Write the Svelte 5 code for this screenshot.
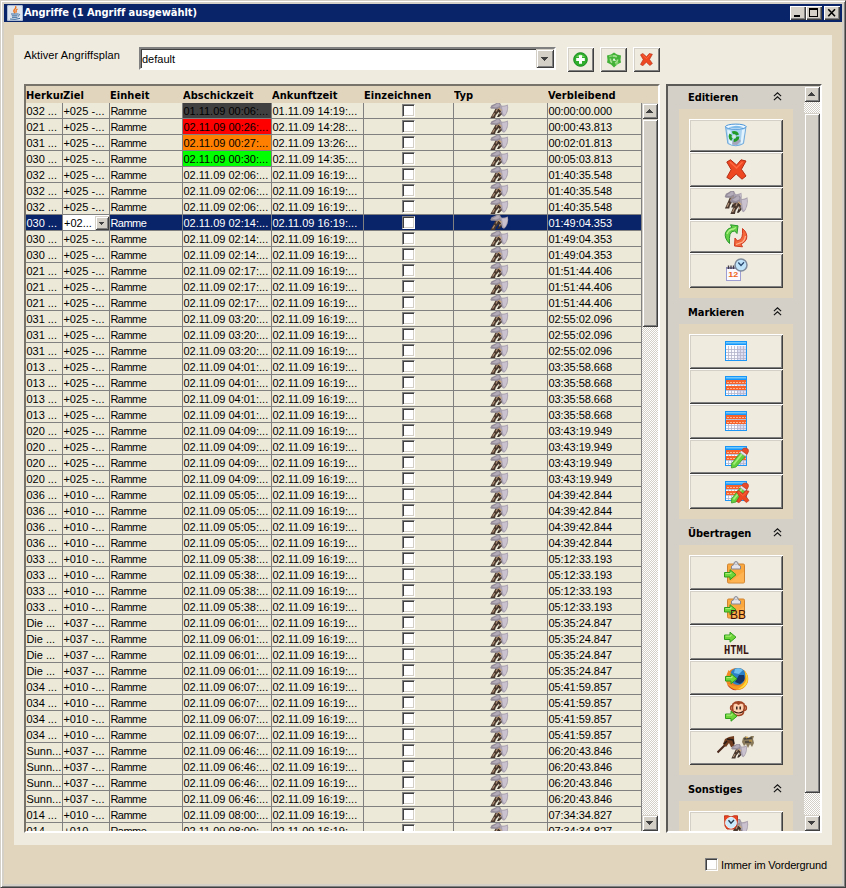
<script>
  const cols = ['Herkunft', 'Ziel', 'Einheit', 'Abschickzeit', 'Ankunftzeit', 'Einzeichnen', 'Typ', 'Verbleibend'];

  // [Anzahl, Herkunft, Ziel, Abschickzeit, Ankunftzeit, Verbleibend, Status]
  const groups = [
    [1, '032 ...', '+025 -...', '01.11.09 00:06:...', '01.11.09 14:19:...', '00:00:00.000', 'past'],
    [1, '021 ...', '+025 -...', '02.11.09 00:26:...', '02.11.09 14:28:...', '00:00:43.813', 'red'],
    [1, '031 ...', '+025 -...', '02.11.09 00:27:...', '02.11.09 13:26:...', '00:02:01.813', 'orange'],
    [1, '030 ...', '+025 -...', '02.11.09 00:30:...', '02.11.09 14:35:...', '00:05:03.813', 'green'],
    [3, '032 ...', '+025 -...', '02.11.09 02:06:...', '02.11.09 16:19:...', '01:40:35.548', ''],
    [3, '030 ...', '+025 -...', '02.11.09 02:14:...', '02.11.09 16:19:...', '01:49:04.353', ''],
    [3, '021 ...', '+025 -...', '02.11.09 02:17:...', '02.11.09 16:19:...', '01:51:44.406', ''],
    [3, '031 ...', '+025 -...', '02.11.09 03:20:...', '02.11.09 16:19:...', '02:55:02.096', ''],
    [4, '013 ...', '+025 -...', '02.11.09 04:01:...', '02.11.09 16:19:...', '03:35:58.668', ''],
    [4, '020 ...', '+025 -...', '02.11.09 04:09:...', '02.11.09 16:19:...', '03:43:19.949', ''],
    [4, '036 ...', '+010 -...', '02.11.09 05:05:...', '02.11.09 16:19:...', '04:39:42.844', ''],
    [4, '033 ...', '+010 -...', '02.11.09 05:38:...', '02.11.09 16:19:...', '05:12:33.193', ''],
    [4, 'Die ...', '+037 -...', '02.11.09 06:01:...', '02.11.09 16:19:...', '05:35:24.847', ''],
    [4, '034 ...', '+010 -...', '02.11.09 06:07:...', '02.11.09 16:19:...', '05:41:59.857', ''],
    [4, 'Sunn...', '+037 -...', '02.11.09 06:46:...', '02.11.09 16:19:...', '06:20:43.846', ''],
    [2, '014 ...', '+010 -...', '02.11.09 08:00:...', '02.11.09 16:19:...', '07:34:34.827', '']
  ];
  const rows = groups.flatMap(([n, from, to, send, arrive, left, state]) =>
    Array.from({ length: n }, () => ({ from, to, send, arrive, left, state }))
  );
  let selected = $state(7);

  const sections = [
    { title: 'Editieren', icons: ['trash', 'delete', 'axes', 'swap', 'time'] },
    { title: 'Markieren', icons: ['grid0', 'grid1', 'grid2', 'gridpen', 'gridx'] },
    { title: 'Übertragen', icons: ['clip', 'clipbb', 'html', 'firefox', 'monkey', 'troops'] },
    { title: 'Sonstiges', icons: ['alarm'] }
  ];
</script>

{#snippet axe()}
  <path d="M6 5 10.5 5.5 9.5 8.5 5.8 13 5 16H.4L2.5 12 4 9z" fill="#4a392e" />
  <path d="M8.5 6 12 8 12 12 9 15H7L9 11z" fill="#3a2e28" />
  <path d="M4.6 11 2.6 14.5M7.4 6.5 6 9M10.5 9.5 9.5 12" stroke="#b3937a" stroke-width="1.2" />
  <path d="M0.2 5.2 1.5 2.4 4 1.4 6.5 0H10L11.3 2.5 10.5 5.2 8 6.4 4 6.2 1.5 6.2z" fill="#948c98" />
  <path d="M2 4 5.5 2 7 .6H9.3L9.8 3.2 6 4.8z" fill="#b5acb9" />
  <path d="M10 2 12.5 3 15 2.6 17.8 1.6 18.2 5 17.6 9 16 12.4 14 14.6 12.2 13.6 11.3 10.5 10.4 7z" fill="#aaa2af" />
  <path d="M12 4 15 3.8 17.2 2.8 17.3 6.5 15.8 11.5 13.8 13.2 12.8 9.5z" fill="#cbc2cf" />
  <path d="M8.5 5.5 11.5 8" stroke="#cba97e" stroke-width="1.3" />
{/snippet}

{#snippet arrow()}
  <path d="M0.5 3.5H6V0.7L12 5.7 6 10.7V8H0.5z" fill="#6fd63a" stroke="#2f9e1c" stroke-width="1" />
  <path d="M1.5 4.6H7V3" fill="none" stroke="#b4f080" stroke-width="1" />
{/snippet}

{#snippet redx()}
  <path d="M4.5 0.8 10.6 6 15 0.8 20 2 15.4 10.3 20 17 16 20.2 10.2 15 4.5 20.5 0.8 18.4 5.2 10.6 0.8 3z" fill="#ee4822" stroke="#b32d14" stroke-width="1" stroke-linejoin="round" />
  <path d="M4 3 10.5 9 16.5 3" fill="none" stroke="#ff6a42" stroke-width="1.4" />
{/snippet}

{#snippet table(kind)}
  <rect x="0.5" y="0.5" width="21" height="19" fill="#fbfbff" stroke="#1e96f5" />
  <rect x="12" y="5" width="9" height="14" fill="#dcdcf2" />
  <path d="M1 8.5H21M1 11.5H21M1 14.5H21M1 17.5H21" stroke="#b4b4cc" opacity=".8" />
  <path d="M3.5 5V19M6.5 5V19M9.5 5V19M12.5 5V19M15.5 5V19M18.5 5V19" stroke="#b4b4cc" opacity=".8" />
  {#if kind > 0}
    <rect x="1" y="4" width="20" height="4" fill="#f7622a" />
    <rect x="1" y={kind === 1 ? 10 : 9} width="20" height="4" fill="#f7622a" />
    <path d="M2 6.5H21M2 {kind === 1 ? 12.5 : 11.5}H21" stroke="#ffb48c" stroke-width="1" stroke-dasharray="2 1" />
  {/if}
  <rect x="0" y="0" width="22" height="4" fill="#1796fa" />
  <rect x="1" y="1" width="20" height="1.5" fill="#73c8fb" />
{/snippet}

{#snippet pencil()}
  <path d="M6.3 17.5 15.5 6 20.5 9.5 11 20.5 6.5 21.5z" fill="#62cf3c" stroke="#3f9c2b" stroke-width=".8" />
  <path d="M8.5 18 17 7.5" stroke="#a4ee7a" stroke-width="1.8" />
  <path d="M15 6 17 3.5 22 7.5 20.5 10z" fill="#e6e6ee" stroke="#9a9aaa" stroke-width=".6" />
  <path d="M16.5 4 18.5 1.8Q21 0.8 23 2.5 24.5 4.5 22 8z" fill="#e84a2a" stroke="#b83216" stroke-width=".6" />
{/snippet}

{#snippet clipboard()}
  <rect x="4.5" y="4.5" width="17" height="19" rx="1.2" fill="#fba93e" stroke="#cf8330" />
  <path d="M6 23 21 12V23z" fill="#ffb95c" opacity=".7" />
  <path d="M8.5 9.5V6.5L11 5Q10.5 2.2 13 2 15.5 2.2 15 5L17.5 6.5V9.5z" fill="#e4e4ea" stroke="#85858f" stroke-width="1" />
  <circle cx="13" cy="4.2" r="1.1" fill="#fff" stroke="#85858f" stroke-width=".5" />
{/snippet}

{#snippet icon(name)}
  {#if name === 'trash'}
    <svg width="24" height="24" viewBox="0 0 24 24">
      <path d="M1.5 3.5 3.8 20.5Q12 25 19.5 20.5L22 3.5z" fill="#a9d3f1" stroke="#74acdc" />
      <path d="M3.2 7 5 20Q7 21.5 8.5 21.8L6.5 7.5zM18 7 16.5 21 18.7 20 21 6z" fill="#e2f3fd" />
      <ellipse cx="11.8" cy="3.7" rx="10.3" ry="2.6" fill="#f1faff" stroke="#4a94d8" stroke-width="1" />
      <path d="M4 4.3Q12 6.5 19.5 4.3 17 2.8 12 2.8z" fill="#7fbcec" />
      <path d="M9 17 14 15 17 18 13 22 8 21.5z" fill="#a4a4ba" />
      <circle cx="10" cy="13.5" r="3.9" fill="none" stroke="#229b28" stroke-width="3" stroke-dasharray="6.2 1.9" />
      <circle cx="10" cy="13.5" r="1.5" fill="#d8f0d2" />
    </svg>
  {:else if name === 'delete'}
    <svg width="21" height="21" viewBox="0 0 21 21">{@render redx()}</svg>
  {:else if name === 'axes'}
    <svg width="26" height="24" viewBox="0 0 26 24">
      <g transform="translate(1.5 0) scale(.95 1.1)">{@render axe()}</g>
      <g transform="translate(7 4.5) scale(.98 1.15)">{@render axe()}</g>
    </svg>
  {:else if name === 'swap'}
    <svg width="24" height="24" viewBox="0 0 24 24">
      <path d="M5.5 19.5Q0 14 1.5 8.5 4 3.5 8 3.5L6.5 0.8 14 1.8 13 9.5 10.8 7Q7 6.8 6 10.5 5 14 5.5 19.5z" fill="#65cf45" stroke="#2a9a2c" />
      <path d="M3 10Q5 5 9.5 5L12 3.5" fill="none" stroke="#b0f08a" stroke-width="1.3" />
      <path d="M18.5 4.5Q24 9 22.5 15 20.5 19 17 20L18.5 22.8 10.5 22 11 14 13.2 16.8Q17 16.5 18 13 18.8 10 18.5 4.5z" fill="#f4683a" stroke="#d03a20" />
      <path d="M12 20.5 18.5 18Q21 16 21.5 12" fill="none" stroke="#ffb090" stroke-width="1.3" />
    </svg>
  {:else if name === 'time'}
    <svg width="24" height="24" viewBox="0 0 24 24">
      <rect x="2.5" y="9.5" width="14" height="13" fill="#fafaff" stroke="#9e9ed2" />
      <path d="M2 10H17" stroke="#8888b0" stroke-width="2" />
      <path d="M4.5 7.5V11M7 7.5V11M9.5 7.5V11" stroke="#443c48" stroke-width="1.3" />
      <text x="4.2" y="19" font-size="8" font-weight="bold" textLength="10" lengthAdjust="spacingAndGlyphs" fill="#ef6420">12</text>
      <circle cx="17" cy="7" r="6" fill="#bfe4fa" stroke="#7d8a9c" stroke-width="1.5" />
      <path d="M14.3 4.5 17 7.5 20 4.3" fill="none" stroke="#28466c" stroke-width="1.3" />
    </svg>
  {:else if name === 'grid0' || name === 'grid1' || name === 'grid2'}
    <svg width="22" height="20" viewBox="0 0 22 20">{@render table(+name[4])}</svg>
  {:else if name === 'gridpen' || name === 'gridx'}
    <svg class="shift" width="25" height="24" viewBox="0 0 25 24">
      {@render table(1)}
      <g transform="translate(0 .5)">{@render pencil()}</g>
      {#if name === 'gridx'}<g transform="translate(11 9) scale(.65 .62)">{@render redx()}</g>{/if}
    </svg>
  {:else if name === 'clip' || name === 'clipbb'}
    <svg width="26" height="25" viewBox="0 0 26 25">
      <g transform="translate(0 -.5)">{@render clipboard()}</g>
      <g transform="translate(1 9)">{@render arrow()}</g>
      {#if name === 'clipbb'}<text x="7" y="24" font-size="13" textLength="16" lengthAdjust="spacingAndGlyphs" fill="#38110d">BB</text>{/if}
    </svg>
  {:else if name === 'html'}
    <svg width="26" height="25" viewBox="0 0 26 25">
      <g transform="translate(1 1.5)">{@render arrow()}</g>
      <text x="1" y="23.5" font-size="12.5" font-weight="bold" textLength="25" lengthAdjust="spacingAndGlyphs" font-family="Liberation Mono, monospace" fill="#3a1512">HTML</text>
    </svg>
  {:else if name === 'firefox'}
    <svg class="fox" width="24" height="24" viewBox="0 0 24 24">
      <circle cx="12" cy="12" r="11" fill="#ee7d20" />
      <circle cx="13" cy="9.5" r="8.5" fill="#2c80c6" />
      <path d="M10 2Q14 0 18 3L14 7 9 6z" fill="#6fc0f0" />
      <path d="M14 8 19 8 20 13 15 17 10 15z" fill="#163466" />
      <path d="M19 3Q25 9 22.5 16 19 23 12 23 5 22 2 16 7 20 13 19 19 17 20 11 20.5 6 19 3z" fill="#f49c22" />
      <path d="M20 4Q25 11 21 18 17 22 13 22 20 18 21.5 12z" fill="#ffdc38" />
      <path d="M2 7 3.5 3 7 7 9 10 6 16 2 16 1 11z" fill="#f18a25" />
      <path d="M2 17Q6 22 12 23 7 24 3 19z" fill="#c83a18" />
      <g transform="translate(0 6)">{@render arrow()}</g>
    </svg>
  {:else if name === 'monkey'}
    <svg width="24" height="22" viewBox="0 0 24 22">
      <circle cx="9" cy="7" r="2.5" fill="#e0a080" stroke="#a04424" stroke-width="1.3" />
      <circle cx="20" cy="7" r="2.5" fill="#e0a080" stroke="#a04424" stroke-width="1.3" />
      <path d="M9 3Q11 0.8 14.5 0.8 18 .8 20 3 21 7 19.5 10 20 14 15 14.5 9 15 9 10 8 7 9 3z" fill="#ffd0b0" stroke="#a04424" stroke-width="1.6" />
      <path d="M10 3.5 12 2.5 14.5 4 17 2.5 19 3.5 17 1H12z" fill="#a04424" />
      <path d="M12.8 5.5V8.5M16.2 5.5V8.5" stroke="#241814" stroke-width="1.4" />
      <path d="M10 10.5Q14.5 13.5 19 10.5" fill="none" stroke="#38180f" stroke-width="1.2" />
      <g transform="translate(1 9.5)">{@render arrow()}</g>
    </svg>
  {:else if name === 'troops'}
    <svg width="38" height="25" viewBox="0 0 38 25">
      <path d="M.5 17.5 8 10" stroke="#4a291c" stroke-width="2.2" />
      <path d="M6 9 8 4 12 2 17 1 17.5 13 14 12 12 8 9 12z" fill="#703c20" />
      <path d="M10 4 16 5 17 9M7 9 10 6" stroke="#271a15" stroke-width="1.5" fill="none" />
      <path d="M26 3 29 1 31 4 34 1 37 1 36 4 37 8 35 12 33 9 31 13 29 9 27 11 25 7z" fill="#897a5b" />
      <path d="M27 4 35 3M28 7 34 7" stroke="#46413a" stroke-width="1.5" />
      <path d="M29 3 31 2M32 6 35 6" stroke="#d9aa4c" stroke-width="1.2" />
      <g transform="translate(14 9) scale(.88 .9)">{@render axe()}</g>
    </svg>
  {:else if name === 'alarm'}
    <svg width="26" height="26" viewBox="0 0 26 26">
      <g transform="translate(7 4) scale(1 1.1)">{@render axe()}</g>
      <path d="M1.5 0.8H5L8 2 11 .8H14.5V5L13.5 11 11 14H4L2 11z" fill="#ec4722" stroke="#c3351c" />
      <circle cx="8" cy="7.8" r="5.4" fill="#c9eafc" stroke="#e8f4fa" stroke-width="1" />
      <path d="M5.5 5.2 8 8.2 11 5" fill="none" stroke="#25384c" stroke-width="1.4" />
    </svg>
  {/if}
{/snippet}

{#snippet tri(dir)}
  <svg width="7" height="4" viewBox="0 0 7 4" shape-rendering="crispEdges">
    <path d={dir === 'up' ? 'M3 0h1v1h1v1h1v1h1v1H0V3h1V2h1V1h1z' : 'M0 0h7v1H6v1H5v1H4v1H3V3H2V2H1V1H0z'} fill="#404040" />
  </svg>
{/snippet}

<div class="window">
  <header class="titlebar">
    <svg class="java" width="16" height="16" viewBox="0 0 16 16">
      <rect width="16" height="16" rx="1.5" fill="#dfe5ee" />
      <rect x=".5" y=".5" width="15" height="15" rx="1.5" fill="none" stroke="#a9b9d2" />
      <path d="M8.5 1.2Q9.5 3 7.5 4.5 6 6 8 8.2M10.5 4Q8 5.5 9.5 7.5" fill="none" stroke="#ee7722" stroke-width="1.4" />
      <path d="M4 9H11M4.8 10.8H10.5M5 12.3H10.5M3 14Q8 15 13 13.4M11.3 9Q14 9 11 11.5" fill="none" stroke="#3d6d9e" stroke-width="1" />
    </svg>
    <h1>Angriffe (1 Angriff ausgewählt)</h1>
    <div class="winbtns">
      <button class="wb" aria-label="Minimieren"><svg width="12" height="10" viewBox="0 0 12 10"><path d="M2 7H8V9H2z" /></svg></button>
      <button class="wb" aria-label="Maximieren"><svg width="12" height="10" viewBox="0 0 12 10"><path d="M1 0H10V9H1zM2 2V8H9V2z" fill-rule="evenodd" /></svg></button>
      <button class="wb close" aria-label="Schliessen"><svg width="12" height="10" viewBox="0 0 12 10"><path d="M2.3 1.2 9 8.2M9 1.2 2.3 8.2" stroke="#000" stroke-width="1.6" /></svg></button>
    </div>
  </header>

  <main class="panel">
    <div class="toolbar">
      <span class="label">Aktiver Angriffsplan</span>
      <div class="combo"><span>default</span><button class="sb" aria-label="Plan wählen">{@render tri('down')}</button></div>
      <button class="tool" aria-label="Hinzufügen">
        <svg width="15" height="15" viewBox="0 0 15 15"><circle cx="7.5" cy="7.5" r="6.8" fill="#2fae2b" stroke="#168a1d" /><path d="M3 5Q7 0 12 5z" fill="#7bd768" /><path d="M6 3.2H9V6H11.8V9H9V11.8H6V9H3.2V6H6z" fill="#fff" /></svg>
      </button>
      <button class="tool" aria-label="Umbenennen">
        <svg width="16" height="16" viewBox="0 0 16 16"><path d="M1 3.5 5 2.5 8 .5 11 2.5 15 3.5 14.5 8 15 10.5 11 12.5 8 15.5 5 12.5 1 10.5 1.5 8z" fill="#43b038" /><circle cx="8" cy="7.5" r="3.6" fill="none" stroke="#a4e090" stroke-width="1.6" stroke-dasharray="4.5 3" /><path d="M6.5 8.5 8 6 10 9z" fill="#e9f8e4" /><path d="M3 4.5 6 4M12 10 10 13" stroke="#7fd46c" stroke-width="1.4" /></svg>
      </button>
      <button class="tool" aria-label="Löschen">
        <svg width="13" height="13" viewBox="0 0 21 21">{@render redx()}</svg>
      </button>
    </div>

    <div class="content">
      <section class="tablebox">
        <div class="grid head">
          {#each cols as c}<div>{c}</div>{/each}
        </div>
        <div class="body">
          <div class="rows">
            {#each rows as r, i}
              <div class="grid row" class:sel={i === selected} role="row" tabindex="-1" onmousedown={() => (selected = i)}>
                <div>{r.from}</div>
                {#if i === selected}
                  <div class="edit">
                    <span>+02...</span>
                    <button class="sb" aria-label="Ziel wählen"><svg width="5" height="3" viewBox="0 0 5 3" shape-rendering="crispEdges"><path d="M0 0h5v1H4v1H3v1H2V2H1V1H0z" fill="#404040" /></svg></button>
                  </div>
                {:else}
                  <div class="to">{r.to}</div>
                {/if}
                <div class="unit">Ramme</div>
                <div class={r.state}>{r.send}</div>
                <div>{r.arrive}</div>
                <div class="mid"><i class="check"></i></div>
                <div class="mid"><svg class="axe" width="19" height="15" viewBox="0 0 19 16" preserveAspectRatio="none">{@render axe()}</svg></div>
                <div class="rem">{r.left}</div>
              </div>
            {/each}
          </div>
          <div class="scroll">
            <button class="sb" aria-label="Hoch">{@render tri('up')}</button>
            <div class="thumb t1"></div>
            <button class="sb last" aria-label="Runter">{@render tri('down')}</button>
          </div>
        </div>
      </section>

      <aside class="side">
        <div class="tasks">
          {#each sections as s, si}
            <div class="sechead" class:first={si === 0}>
              <span>{s.title}</span>
              <svg width="9" height="9" viewBox="0 0 9 9"><path d="M.9 4.2 4.5 .9 8.1 4.2M.9 8.2 4.5 4.9 8.1 8.2" fill="none" stroke="#111" stroke-width="1.15" /></svg>
            </div>
            <div class="secbody">
              {#each s.icons as name, k}
                <button class="task" class:short={si === 0 && (k === 0 || k === 2 || k === 3)} aria-label={name}>{@render icon(name)}</button>
              {/each}
            </div>
          {/each}
        </div>
        <div class="scroll">
          <button class="sb" aria-label="Hoch">{@render tri('up')}</button>
          <div class="thumb t2"></div>
          <button class="sb last" aria-label="Runter">{@render tri('down')}</button>
        </div>
      </aside>
    </div>
  </main>

  <footer><i class="check"></i><span>Immer im Vordergrund</span></footer>
</div>

<style>
  .window, .window * { box-sizing: border-box; }
  .window {
    width: 846px; height: 888px; overflow: hidden;
    display: flex; flex-direction: column;
    background: #e2d5be; color: #000;
    font: 11px/14px 'Liberation Sans', Arial, sans-serif;
    border: 1px solid; border-color: #d4d0c8 #404040 #404040 #d4d0c8;
    box-shadow: inset 1px 1px #fff, inset -1px -1px #808080, inset 3px 3px #d4d0c8, inset -3px -3px #d4d0c8;
    padding: 3px;
  }
  button { margin: 0; padding: 0; border: 0; font: inherit; display: flex; align-items: center; justify-content: center; }
  svg { display: block; flex: none; }
  .titlebar { height: 18px; flex: none; background: #0a246a; display: flex; align-items: center; padding: 0 2px; }
  .java { margin-left: 1px; }
  h1 { margin: 0 0 0 1px; font: bold 11px/18px 'DejaVu Sans Condensed', 'DejaVu Sans', sans-serif; letter-spacing: -0.06px; color: #fff; flex: 1; white-space: nowrap; }
  .winbtns { display: flex; }
  .wb { width: 16px; height: 14px; background: #d4d0c8; box-shadow: inset 1px 1px #fff, inset -1px -1px #404040, inset -2px -2px #808080; }
  .wb.close { margin-left: 2px; }
  .panel { margin: 13px 0 0 10px; width: 818px; height: 810px; flex: none; background: #efebdf; padding: 12px 10px 0; }
  .toolbar { display: flex; height: 25px; align-items: flex-start; }
  .label { width: 115px; padding-top: 1px; white-space: nowrap; letter-spacing: 0.1px; }
  .combo {
    width: 417px; height: 23px; background: #fff; margin-right: 11px; display: flex; align-items: stretch; justify-content: space-between;
    border: 2px solid; border-color: #808080 #fff #fff #808080; box-shadow: inset 1px 1px #404040; padding: 0 0 1px 1px;
  }
  .combo span { line-height: 20px; }
  .combo .sb { height: 19px; width: 18px; }
  .sb { width: 16px; height: 16px; flex: none; background: #d4d0c8; box-shadow: inset 1px 1px #d4d0c8, inset -1px -1px #404040, inset 2px 2px #fff, inset -2px -2px #808080; padding-right: 1px; }
  .tool { width: 27px; height: 25px; margin-right: 6px; background: #efebdf; box-shadow: inset 1px 1px #fff, inset -1px -1px #404040, inset 2px 2px #d4d0c8, inset -2px -2px #808080; }
  .content { display: flex; margin-top: 12px; gap: 6px; }
  .tablebox, .side { height: 749px; border: 2px solid; border-color: #77736b #fff #fff #77736b; overflow: hidden; }
  .tablebox { width: 636px; background: #e2d5be; }
  .grid { display: grid; grid-template-columns: 37px 47px 73px 89px 92px 90px 94px 94px; }
  .head { height: 17px; font: bold 11px/19px 'DejaVu Sans Condensed', 'DejaVu Sans', sans-serif; letter-spacing: 0.05px; }
  .head > div { overflow: hidden; white-space: nowrap; }
  .body { display: flex; height: 728px; }
  .rows { width: 616px; overflow: hidden; }
  .row { height: 16px; background: #ece9d8; line-height: 17px; }
  .row > div { height: 16px; border-right: 1px solid #808080; border-bottom: 1px solid #808080; overflow: hidden; white-space: nowrap; padding-left: 0.4px; }
  .row > .to { letter-spacing: 0.05px; }
  .row > .unit { letter-spacing: -0.5px; }
  .row > .rem { letter-spacing: -0.05px; }
  .sel { background: #0a246a; color: #fff; }
  .past { background: #404040; }
  .red { background: #f00; }
  .orange { background: #ff8000; }
  .green { background: #0f0; }
  .row > .mid { display: flex; justify-content: center; padding: 0; }
  .axe { margin-right: 2px; }
  .check { display: block; width: 13px; height: 13px; margin: 1px 1px 0 0; background: #fff; border: 1px solid; border-color: #808080 #fff #fff #808080; box-shadow: inset 1px 1px #404040, inset -1px -1px #d4d0c8; flex: none; }
  .row > .edit { display: flex; justify-content: space-between; background: #fff; color: #000; padding-left: 1px; }
  .edit .sb { width: 14px; height: 14px; margin-top: 1px; }
  .scroll { width: 16px; display: flex; flex-direction: column; background: conic-gradient(#fff 25%, #d4d0c8 0 50%, #fff 0 75%, #d4d0c8 0) 0 0 / 2px 2px; }
  .thumb { background: #d4d0c8; box-shadow: inset 1px 1px #d4d0c8, inset -1px -1px #404040, inset 2px 2px #fff, inset -2px -2px #808080; }
  .t1 { height: 208px; }
  .t2 { height: 680px; margin-top: 11px; }
  .last { margin-top: auto; }
  .side { width: 156px; display: flex; background: #d4d0c8; border-color: #5c5a56 #fff #fff #5c5a56; }
  .tasks { flex: 1; height: 745px; overflow: hidden; padding-left: 11px; }
  .sechead { height: 26px; width: 114px; display: flex; align-items: flex-end; justify-content: space-between; padding: 0 11px 8px 9px; font: bold 11px/9px 'DejaVu Sans Condensed', 'DejaVu Sans', sans-serif; letter-spacing: -0.05px; }
  .sechead span { margin-bottom: -1px; }
  .sechead.first { height: 23px; }
  .secbody { width: 114px; background: #e2d5be; padding: 10px; }
  .task { width: 94px; height: 35px; padding-bottom: 1px; background: #efebdf; box-shadow: inset 1px 1px #fff, inset -1px -1px #404040, inset 2px 2px #d4d0c8, inset -2px -2px #808080; }
  .task.short { height: 33px; }
  .shift { margin: 4px 0 0 3px; }
  .fox { margin: 3px 0 0 2px; }
  footer { display: flex; margin: 14px 0 0 701px; white-space: nowrap; }
  footer .check { margin: -1px 3px 0 0; }
  footer span { letter-spacing: -0.18px; line-height: 13px; }
</style>
